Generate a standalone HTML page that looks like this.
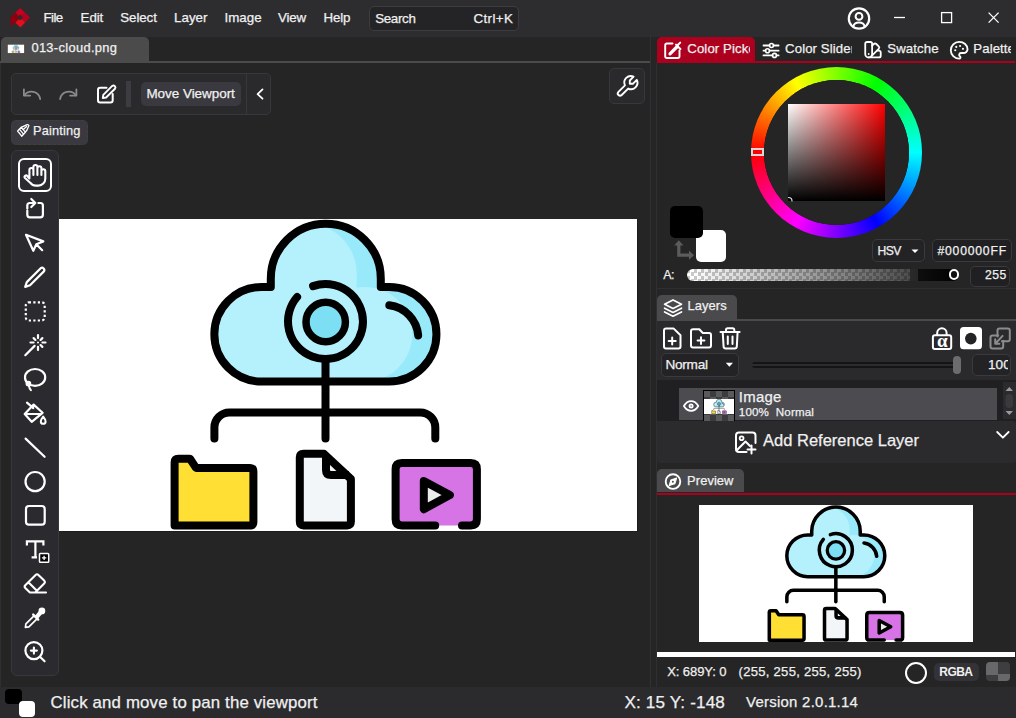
<!DOCTYPE html>
<html><head><meta charset="utf-8">
<style>
*{margin:0;padding:0;box-sizing:border-box}
html,body{width:1016px;height:718px;overflow:hidden;background:#252525;font-family:"Liberation Sans",sans-serif;color:#f0f0f0;font-size:13px}
.a{position:absolute}
.t{position:absolute;white-space:nowrap;line-height:1;-webkit-text-stroke:0.25px #f0f0f0}
svg{position:absolute;overflow:visible}
</style></head><body>
<!-- menu bar -->
<div class="a" style="left:0;top:0;width:1016px;height:36.7px;background:#2d2d30"></div>
<div class="a" style="left:369px;top:6px;width:150px;height:25px;border:1px solid #3d3d41;border-radius:5px;background:#242426"></div>

<!-- tab bar -->
<div class="a" style="left:1px;top:37px;width:148px;height:24px;background:#4b4b4c;border-radius:5px 5px 0 0"></div>
<div class="a" style="left:0;top:61px;width:650px;height:2px;background:#4b4b4c"></div>

<!-- separators -->
<div class="a" style="left:0;top:63px;width:1px;height:624px;background:#2f2f32"></div>
<div class="a" style="left:650px;top:36px;width:1px;height:651px;background:#313134"></div>
<div class="a" style="left:656px;top:63px;width:1px;height:624px;background:#2f2f32"></div>

<!-- toolbar -->
<div class="a" style="left:11px;top:73px;width:260px;height:42px;border:1px solid #38383c;border-radius:5px;background:#2a2a2d"></div>
<div class="a" style="left:126px;top:81px;width:5px;height:26px;background:#3d3d41"></div>
<div class="a" style="left:141px;top:82px;width:100px;height:24px;background:#3a393f;border-radius:5px"></div>
<div class="a" style="left:246px;top:74px;width:1px;height:40px;background:#38383c"></div>
<div class="a" style="left:609px;top:68px;width:36px;height:36px;border:1px solid #38383c;border-radius:5px;background:#2a2a2d"></div>

<div class="a" style="left:11px;top:120px;width:77px;height:25px;background:#3a393f;border-radius:5px;border:1px dashed #3f3f44"></div>

<!-- tool panel -->
<div class="a" style="left:11px;top:150px;width:48px;height:526px;background:#2b2b2f;border:1px solid #38383c;border-radius:6px"></div>
<div class="a" style="left:18px;top:158px;width:34px;height:34px;border:2px solid #fff;border-radius:6px"></div>

<!-- canvas -->
<div class="a" style="left:59px;top:219px;width:578px;height:312px;background:#fff;box-shadow:1px 1px 0 #1c1c1c"></div>

<!-- status bar -->
<div class="a" style="left:0;top:687px;width:1016px;height:31px;background:#2b2b2e"></div>
<div class="a" style="left:5px;top:688.6px;width:17px;height:15.5px;background:#000;border-radius:4px"></div>
<div class="a" style="left:18.7px;top:701px;width:16px;height:15.5px;background:#fff;border-radius:4px"></div>

<!-- right panel tabs -->
<div class="a" style="left:657px;top:37px;width:98px;height:25px;background:#ad001e;border-radius:5px 5px 0 0"></div>
<div class="a" style="left:657px;top:61px;width:358px;height:2px;background:#ad001e"></div>

<!-- color picker body -->
<div class="a" style="left:657px;top:287.5px;width:359px;height:1px;background:#2f2f32"></div>
<div class="a" style="left:750.6px;top:66.6px;width:171.4px;height:171.4px;border-radius:50%;background:conic-gradient(from 270deg,#f00,#ff0,#0f0,#0ff,#00f,#f0f,#f00)"></div>
<div class="a" style="left:763.6px;top:79.8px;width:145px;height:145px;border-radius:50%;background:#252525;box-shadow:0 0 0.6px #111"></div>
<div class="a" style="left:788px;top:104px;width:97px;height:97px;background:linear-gradient(to bottom,rgba(0,0,0,0),#000),linear-gradient(to right,#fff,#f00)"></div>
<div class="a" style="left:751px;top:148px;width:13px;height:8px;border:2px solid #d8d8d8;background:#f00"></div>
<div class="a" style="left:695.7px;top:230px;width:30.8px;height:32.3px;background:#fff;border-radius:5px"></div>
<div class="a" style="left:670px;top:205.6px;width:33.3px;height:32px;background:#000;border-radius:5px"></div>
<div class="a" style="left:872.2px;top:239.4px;width:52.4px;height:23px;border:1px solid #3a3a3e;border-radius:5px;background:#232325"></div>
<div class="a" style="left:932px;top:239.4px;width:79.5px;height:23px;border:1px solid #3a3a3e;border-radius:5px;background:#202022"></div>
<div class="a" style="left:687px;top:269px;width:272px;height:12px;border-radius:6px;background:linear-gradient(to right,rgba(0,0,0,0) 2%,rgba(0,0,0,.7) 82%,#2a2a2b 82%,#262627 85%,#0e0e0e 85%,#000),repeating-conic-gradient(#fff 0 25%,#c8c8c8 0 50%) 0 0/7px 7px"></div>
<div class="a" style="left:948.8px;top:269.4px;width:10.6px;height:10.6px;border-radius:50%;border:2px solid #fff;background:#111"></div>
<div class="a" style="left:969.9px;top:265.6px;width:40.1px;height:21px;border:1px solid #3a3a3e;border-radius:5px;background:#202022"></div>

<!-- layers -->
<div class="a" style="left:657px;top:295.4px;width:80px;height:24px;background:#4a4a4d;border-radius:5px 5px 0 0"></div>
<div class="a" style="left:657px;top:319px;width:359px;height:2px;background:#4a4a4d"></div>
<div class="a" style="left:657px;top:321px;width:359px;height:59px;background:#2a2a2d"></div>
<div class="a" style="left:657px;top:380px;width:359px;height:41.5px;background:#202022"></div>
<div class="a" style="left:660.7px;top:353.4px;width:78.8px;height:23.2px;border:1px solid #3a3a3e;border-radius:5px;background:#232325"></div>
<div class="a" style="left:751.6px;top:362px;width:208px;height:6px;border-radius:3px;background:linear-gradient(#141416 0 35%,#2c2c2f 35% 62%,#141416 62%)"></div>
<div class="a" style="left:952.7px;top:356px;width:8.3px;height:18px;border-radius:4px;background:#6c6c6e"></div>
<div class="a" style="left:972.3px;top:354.3px;width:39.1px;height:21.5px;border:1px solid #3a3a3e;border-radius:5px;background:#232325"></div>
<div class="a" style="left:678.9px;top:388px;width:318.2px;height:32.4px;background:#4b4b50"></div>
<div class="a" style="left:703px;top:390px;width:32px;height:31px;background:#000"></div>
<div class="a" style="left:704px;top:391px;width:30px;height:30px;background:repeating-conic-gradient(#3c3c3e 0 25%,#5a5a5c 0 50%) 0 0/12px 12px"></div>
<div class="a" style="left:704px;top:398.9px;width:30.1px;height:14.8px;background:#fff"></div>
<div class="a" style="left:1002.9px;top:382.4px;width:13.1px;height:37px;background:#2b2b2e"></div>
<div class="a" style="left:657px;top:421.4px;width:359px;height:41.6px;background:#2b2b2e;border-radius:0 4px 4px 4px"></div>

<!-- preview -->
<div class="a" style="left:657px;top:469px;width:87px;height:23.4px;background:#4a4a4d;border-radius:5px 5px 0 0"></div>
<div class="a" style="left:657px;top:492.6px;width:359px;height:2.4px;background:#ad001e"></div>
<div class="a" style="left:698.7px;top:504.6px;width:274.4px;height:137.6px;background:#fff"></div>
<div class="a" style="left:657px;top:652px;width:357.7px;height:5px;background:#fff"></div>
<div class="a" style="left:905.1px;top:661.5px;width:22.1px;height:22.1px;border-radius:50%;border:2.6px solid #fff"></div>
<div class="a" style="left:933.7px;top:662.7px;width:45.3px;height:18.5px;border-radius:5px;background:#333337"></div>
<div class="a" style="left:985.5px;top:662.1px;width:24.4px;height:19.3px;border-radius:4px;background:repeating-conic-gradient(#3e3e40 0 25%,#68686a 0 50%) 0 0/24.4px 25px;background-position:0 0"></div>
<svg width="1016" height="718" style="left:0;top:0" viewBox="0 0 1016 718">
<defs>
<clipPath id="cc"><path d="M270.8,287 H261.6 A47.25,47.25 0 0 0 261.6,381.5 H389.2 A47.25,47.25 0 0 0 389.2,287 H380.8 V278.7 A55,55 0 0 0 270.8,278.7 Z"/></clipPath>
<clipPath id="cv"><rect x="59" y="219" width="578" height="312"/></clipPath>
<clipPath id="pv"><rect x="14.5" y="218" width="622.3" height="312"/></clipPath>
<g id="ill">
<path d="M270.8,287 H261.6 A47.25,47.25 0 0 0 261.6,381.5 H389.2 A47.25,47.25 0 0 0 389.2,287 H380.8 V278.7 A55,55 0 0 0 270.8,278.7 Z" fill="#98eafa"/>
<g clip-path="url(#cc)" fill="#b4f1fc">
<circle cx="306.6" cy="273.5" r="50"/><rect x="200" y="273.5" width="156.6" height="120"/>
<circle cx="365" cy="334.25" r="47.25"/>
</g>
<path d="M270.8,287 H261.6 A47.25,47.25 0 0 0 261.6,381.5 H389.2 A47.25,47.25 0 0 0 389.2,287 H380.8 V278.7 A55,55 0 0 0 270.8,278.7 Z" fill="none" stroke="#000" stroke-width="8" stroke-linejoin="round"/>
<path d="M313.1,286.1 A37.5,37.5 0 1 1 297.1,297" fill="none" stroke="#000" stroke-width="8" stroke-linecap="round"/>
<circle cx="325.7" cy="322" r="19.7" fill="#7ddff3" stroke="#000" stroke-width="7.5"/>
<path d="M389.3,305.3 A33,33 0 0 1 418.2,335.4" fill="none" stroke="#000" stroke-width="8" stroke-linecap="round"/>
<path d="M325.5,359 V438.5" stroke="#000" stroke-width="8" stroke-linecap="round"/>
<path d="M214.4,438.5 V427.5 A15,15 0 0 1 229.4,412.5 H420.3 A15,15 0 0 1 435.3,427.5 V438.5" fill="none" stroke="#000" stroke-width="8" stroke-linecap="round"/>
<path d="M174.6,525.6 V462.5 Q174.6,458.7 178.4,458.7 H190 L196,467.9 H249.6 Q253.4,467.9 253.4,471.7 V521.8 Q253.4,525.6 249.6,525.6 Z" fill="#ffdf33" stroke="#000" stroke-width="8" stroke-linejoin="round"/>
<path d="M299.8,457.6 Q299.8,453.8 303.6,453.8 H324 L350.9,479 V521.6 Q350.9,525.4 347.1,525.4 H303.6 Q299.8,525.4 299.8,521.6 Z" fill="#f3f6f8" stroke="#000" stroke-width="8" stroke-linejoin="round"/>
<path d="M326,456 V470 Q326,475 331,475 H349" fill="none" stroke="#000" stroke-width="8" stroke-linejoin="round"/>
<path d="M395.6,469 Q395.6,462.9 401.7,462.9 H470.8 Q476.9,462.9 476.9,469 V519.3 Q476.9,525.4 470.8,525.4 H401.7 Q395.6,525.4 395.6,519.3 Z" fill="#d674e6"/>
<path d="M435.2,525.4 H401.7 Q395.6,525.4 395.6,519.3 V469 Q395.6,462.9 401.7,462.9 H470.8 Q476.9,462.9 476.9,469 V519.3 Q476.9,525.4 470.8,525.4 H462" fill="none" stroke="#000" stroke-width="8" stroke-linecap="round"/>
<path d="M423.8,481 L449.9,495 L423.8,509.2 Z" fill="#ebebeb" stroke="#000" stroke-width="8" stroke-linejoin="round"/>
</g>
</defs>
<g clip-path="url(#cv)"><use href="#ill"/></g>
<g transform="translate(692.3,408.4) scale(0.441)" clip-path="url(#pv)"><use href="#ill"/></g>
<g transform="translate(703.3,388.35) scale(0.0484)" clip-path="url(#pv)"><use href="#ill"/></g>
<rect x="7.8" y="44.7" width="16.3" height="8.35" fill="#fff"/><g transform="translate(7.42,39.0) scale(0.0262)" clip-path="url(#pv)"><use href="#ill"/></g>
</svg>
<div class="t" style="left:43.5px;top:10.6px;font-size:13.33px;letter-spacing:-0.57px">File</div>
<div class="t" style="left:80.6px;top:10.6px;font-size:13.33px;letter-spacing:-0.10px">Edit</div>
<div class="t" style="left:120.3px;top:10.6px;font-size:13.33px;letter-spacing:-0.10px">Select</div>
<div class="t" style="left:174.1px;top:10.6px;font-size:13.33px;letter-spacing:-0.02px">Layer</div>
<div class="t" style="left:224.6px;top:10.6px;font-size:13.33px;letter-spacing:-0.02px">Image</div>
<div class="t" style="left:278.1px;top:10.6px;font-size:13.33px;letter-spacing:-0.20px">View</div>
<div class="t" style="left:323.4px;top:10.6px;font-size:13.33px;letter-spacing:-0.10px">Help</div>
<div class="t" style="left:375.2px;top:11.8px;font-size:13.33px;letter-spacing:-0.32px">Search</div>
<div class="t" style="left:473.4px;top:11.8px;font-size:13.33px;letter-spacing:0.42px">Ctrl+K</div>
<div class="t" style="left:31.4px;top:41.9px;font-size:12.90px;letter-spacing:0.32px">013-cloud.png</div>
<div class="t" style="left:146.4px;top:86.7px;font-size:13.48px;letter-spacing:-0.03px">Move Viewport</div>
<div class="t" style="left:33.0px;top:125.4px;font-size:12.75px;letter-spacing:0.17px">Painting</div>
<div class="t" style="left:687.3px;top:42.0px;font-size:13.19px;letter-spacing:0.10px;width:62.6px;overflow:hidden">Color Picker</div>
<div class="t" style="left:785.1px;top:42.0px;font-size:13.19px;letter-spacing:0.10px;width:67.4px;overflow:hidden">Color Slider</div>
<div class="t" style="left:887.3px;top:42.0px;font-size:13.19px;letter-spacing:0.10px;width:51.8px;overflow:hidden">Swatches</div>
<div class="t" style="left:973.3px;top:42.0px;font-size:13.19px;letter-spacing:0.10px;width:37.8px;overflow:hidden">Palettes</div>
<div class="t" style="left:877.5px;top:244.7px;font-size:12.17px;letter-spacing:-0.60px">HSV</div>
<div class="t" style="left:937.5px;top:244.7px;font-size:12.17px;letter-spacing:0.80px">#000000FF</div>
<div class="t" style="left:663.3px;top:268.9px;font-size:12.46px;letter-spacing:-0.60px">A:</div>
<div class="t" style="left:985.0px;top:269.4px;font-size:12.17px;letter-spacing:0.45px">255</div>
<div class="t" style="left:687.5px;top:300.4px;font-size:12.90px;letter-spacing:0.10px">Layers</div>
<div class="t" style="left:665.5px;top:357.5px;font-size:13.62px;letter-spacing:-0.28px">Normal</div>
<div class="t" style="left:987.9px;top:357.6px;font-size:13.62px;letter-spacing:0.10px;width:20.1px;overflow:hidden">100</div>
<div class="t" style="left:738.8px;top:390.3px;font-size:14.93px;letter-spacing:0.28px">Image</div>
<div class="t" style="left:738.8px;top:407.1px;font-size:11.59px;letter-spacing:0.16px">100%&nbsp; Normal</div>
<div class="t" style="left:763.1px;top:433.2px;font-size:16.52px;letter-spacing:-0.01px">Add Reference Layer</div>
<div class="t" style="left:687.1px;top:474.7px;font-size:12.90px;letter-spacing:0.08px">Preview</div>
<div class="t" style="left:667.2px;top:665.3px;font-size:13.04px;letter-spacing:-0.09px">X: 689Y: 0</div>
<div class="t" style="left:738.5px;top:665.3px;font-size:13.04px;letter-spacing:0.29px">(255, 255, 255, 255)</div>
<div class="t" style="left:939.3px;top:665.6px;font-size:12.03px;letter-spacing:-0.57px;font-weight:bold;-webkit-text-stroke:0">RGBA</div>
<div class="t" style="left:50.5px;top:694.5px;font-size:16.81px;letter-spacing:0.17px">Click and move to pan the viewport</div>
<div class="t" style="left:624.5px;top:694.1px;font-size:17.10px;letter-spacing:0.15px">X: 15 Y: -148</div>
<div class="t" style="left:746.0px;top:695.0px;font-size:14.93px;letter-spacing:0.27px">Version 2.0.1.14</div>
<svg width="1016" height="718" style="left:0;top:0" viewBox="0 0 1016 718" fill="none" stroke="#fff" stroke-width="2.2" stroke-linecap="round" stroke-linejoin="round">
<!-- logo -->
<g stroke="none">
<polygon points="20.2,8 25.1,12.75 20.2,17.5 15.2,12.75" fill="#c8001e"/>
<polygon points="25.1,12.75 30,17.5 25.2,22.4 20.2,17.5" fill="#b8001c"/>
<polygon points="20.2,17.5 25.2,22.4 20.3,27.4 15.3,22.5" fill="#e2101c"/>
<polygon points="15.2,12.75 20.2,17.5 15.3,22.5 11,26.6 10.2,17.5" fill="#8e0010"/>
<polygon points="20.2,14.6 23.1,17.5 20.2,20.4 17.3,17.5" fill="#2b2b2e"/>
</g>
<!-- profile & window controls -->
<circle cx="859" cy="18.5" r="10.2" stroke-width="2.2"/>
<circle cx="859" cy="16.4" r="3.4" stroke-width="2"/>
<path d="M853.4,26.5 Q854,22.6 859,22.6 Q864,22.6 864.6,26.5" stroke-width="2"/>
<path d="M894,17.5 H905" stroke-width="1.3" stroke-linecap="butt"/>
<rect x="941.6" y="12.6" width="10" height="10" stroke-width="1.3" stroke-linejoin="miter"/>
<path d="M988.6,12.6 L998.6,22.6 M998.6,12.6 L988.6,22.6" stroke-width="1.3" stroke-linecap="butt"/>
<!-- toolbar -->
<g stroke="#8a8a8c" stroke-width="1.8">
<path d="M23.9,89.3 V95.6 H30.2"/>
<path d="M24.4,95.3 A8.8,8.8 0 0 1 40.2,99"/>
<path d="M76.4,89.3 V95.6 H70.1"/>
<path d="M75.9,95.3 A8.8,8.8 0 0 0 60.1,99"/>
</g>
<path d="M106.5,87.8 H100.2 Q98,87.8 98,90 V100.3 Q98,102.5 100.2,102.5 H110.5 Q112.7,102.5 112.7,100.3 V94" stroke-width="2"/>
<path d="M102.8,98 L103.3,94.8 L112.2,85.9 A2,2 0 0 1 115,88.7 L106.1,97.5 Z" stroke-width="1.9"/>
<path d="M262.5,89.4 L257.6,94.1 L262.5,98.7" stroke-width="1.8"/>
<g transform="translate(640.6,72.9) scale(-1.08,1.08)"><path d="M7 10h3v-3l-3.5 -3.5a6 6 0 0 1 8 8l6 6a2 2 0 0 1 -3 3l-6 -6a6 6 0 0 1 -8 -8l3.5 3.5" stroke-width="1.75"/></g>
<!-- painting brush -->
<g stroke-width="1.3">
<path d="M17.6,131 L21.3,127.3 L25.4,132.2 L21.7,136.2 Z"/>
<path d="M19.4,129.2 L23.5,134.2 M21.3,127.3 L22.8,126.6 L27.2,124.6 Q28.6,124.3 28.9,125.6 L27,130 L25.4,132.2"/>
<path d="M23.3,129.5 L26.6,126.6"/>
</g>
<!-- tools -->
<path d="M29.4,178.5 V170 A2,2 0 0 1 33.4,170 V175 M33.4,170.5 V167 A2,2 0 0 1 37.4,167 V175 M37.4,168.3 A2,2 0 0 1 41.4,168.3 V175 M41.4,171.2 A1.95,1.95 0 0 1 45.3,171.2 V178.8 A6.8,6.8 0 0 1 38.5,185.6 H35.8 A6.5,6.5 0 0 1 30.5,183 L25,178 A1.5,1.5 0 0 1 27.3,176 L29.4,178.5" stroke-width="2.1"/>
<path d="M27.3,208.6 V205.5 Q27.3,203 29.8,203 H35 M31.3,199 L35.3,203 L31.3,207 M38.4,203 H40.4 Q42.9,203 42.9,205.5 V214.8 Q42.9,217.3 40.4,217.3 H29.8 Q27.3,217.3 27.3,214.8 V210.6"/>
<path d="M26,234.8 L43.3,241.4 L36.3,244.3 L33.3,250.8 Z M36.3,244.3 L42.2,250.2"/>
<path d="M25.2,286.9 L26.8,282.1 L40.7,268.2 A2.3,2.3 0 0 1 43.9,271.4 L30,285.3 Z"/>
<rect x="25.8" y="302.3" width="18.9" height="18.2" rx="3" stroke-dasharray="2.2 2.3" stroke-linecap="butt"/>
<path d="M25.3,355.2 L34.6,345.9 M42.40,342.50 L45.50,342.50 M38.00,338.10 L38.00,335.00 M33.60,342.50 L30.50,342.50 M38.00,346.90 L38.00,350.00 M40.55,339.95 L42.38,338.12 M35.45,339.95 L33.62,338.12 M40.55,345.05 L42.38,346.88" stroke-width="2.2"/>
<circle cx="38" cy="342.5" r="1" fill="#fff" stroke="none"/>
<ellipse cx="35.1" cy="377.4" rx="10.1" ry="8.4" stroke-width="2.2"/>
<circle cx="28.4" cy="383.6" r="1.9" stroke-width="1.9"/>
<path d="M28.9,385.5 Q29.3,388.3 30.9,390.2" stroke-width="2"/>
<path d="M24.7,414 L33.65,404.6 L42.6,412.8 L31.7,421.8 Z M25.5,414 H41 M27,402.7 L33.3,408.1"/>
<path d="M43.2,416.6 Q40.8,419.7 40.8,421.4 A2.4,2.4 0 0 0 45.6,421.4 Q45.6,419.7 43.2,416.6 Z" stroke-width="2"/>
<path d="M25.6,438.6 L44.6,456.8"/>
<circle cx="35.1" cy="481.6" r="9.6"/>
<rect x="26" y="506" width="18.7" height="18.7" rx="3"/>
<path d="M26.9,545.5 V541.3 H43.4 V545.5 M35.4,541.3 V557.4 M31.6,557.4 H37" stroke-width="2.2" stroke-linecap="butt" stroke-linejoin="miter"/>
<rect x="39.5" y="553.5" width="9.2" height="8.8" fill="#000" stroke-width="1.5" rx="0.8"/>
<path d="M44.1,555.7 V560.1 M41.9,557.9 H46.3" stroke-width="1.3" stroke-linecap="butt"/>
<path d="M29.9,592.5 L25.3,588 Q24,586.6 25.3,585.2 L35.6,574.9 Q37,573.6 38.4,574.9 L44.2,580.6 Q45.5,582 44.2,583.4 L35.2,592.5 M29.9,592.5 H46 M28.6,582.5 L36.4,590.3" stroke-width="2.1"/>
<path d="M25.4,627.4 L25.9,623.9 L34.2,615.6 M25.4,627.4 L28.9,626.9 L37.2,618.6" stroke-width="1.7"/>
<path d="M33.2,614.6 L38.2,619.6" stroke-width="2.4"/>
<circle cx="41.9" cy="610.9" r="3.4" fill="#fff" stroke="none"/>
<path d="M36.2,617.6 L41.9,610.9" stroke-width="4.2" stroke-linecap="butt"/>
<circle cx="33.9" cy="650.6" r="8.5"/>
<path d="M33.9,647.6 V653.6 M30.9,650.6 H36.9 M40.2,656.9 L44.6,661.3" stroke-width="2.1"/>
</svg>
<svg width="1016" height="718" style="left:0;top:0" viewBox="0 0 1016 718" fill="none" stroke="#fff" stroke-width="2" stroke-linecap="round" stroke-linejoin="round">
<!-- right tabs -->
<path d="M672.5,43.5 H667 Q665.2,43.5 665.2,45.3 V56.2 Q665.2,58 667,58 H677.7 Q679.5,58 679.5,56.2 V50.5" stroke-width="1.9"/>
<path d="M670,53.8 L677.3,46.5" stroke-width="3.2" stroke-linecap="round"/>
<path d="M676,44.6 L680.4,49 M678,44.8 L680.2,42.6" stroke-width="2" stroke-linecap="round"/>
<g stroke-width="1.8">
<path d="M763.5,45.5 H769.5 M773.5,45.5 H778.6 M763.5,50.7 H765.5 M769.5,50.7 H778.6 M763.5,55.4 H772.5 M776.5,55.4 H778.6"/>
<circle cx="771.5" cy="45.5" r="2" stroke-width="1.6"/>
<circle cx="767.5" cy="50.7" r="2" stroke-width="1.6"/>
<circle cx="774.5" cy="55.4" r="2" stroke-width="1.6"/>
</g>
<g transform="translate(883.3,39.4) scale(-0.86,0.86)" stroke-width="2.1">
<path d="M19 3h-4a2 2 0 0 0 -2 2v12a4 4 0 0 0 8 0v-12a2 2 0 0 0 -2 -2"/><path d="M13 7.35l-2 -2a2 2 0 0 0 -2.828 0l-2.828 2.828a2 2 0 0 0 0 2.828l9 9"/><path d="M7.3 13h-2.3a2 2 0 0 0 -2 2v4a2 2 0 0 0 2 2h12"/><path d="M17 17l0 .01"/>
</g>
<g transform="translate(948,39.1) scale(0.93)" stroke-width="2">
<path d="M12 21a9 9 0 0 1 0 -18c4.97 0 9 3.582 9 8c0 1.06 -.474 2.078 -1.318 2.828c-.844 .75 -1.989 1.172 -3.182 1.172h-2.5a2 2 0 0 0 -1 3.75a1.3 1.3 0 0 1 -1 2.25"/><g fill="#fff" stroke="none"><circle cx="8.9" cy="8.4" r="1.15"/><circle cx="13" cy="7.4" r="1.15"/><circle cx="16.1" cy="10.5" r="1.15"/><circle cx="7.8" cy="12" r="1.15"/></g>
</g>
<!-- color picker extras -->
<path d="M788.5,197.5 A3.5,3.5 0 0 1 792,201" stroke="#ddd" stroke-width="1.2"/>
<path d="M911.5,249.5 H918.5 L915,253 Z" fill="#fff" stroke="none"/>
<g stroke="#5c5c5e" stroke-width="3.2" stroke-linecap="butt" stroke-linejoin="miter">
<path d="M678.8,243 V255.2 H690"/>
</g>
<path d="M674.2,245.5 L678.8,240.2 L683.4,245.5 Z M689,250.6 L694,255.2 L689,259.8 Z" fill="#5c5c5e" stroke="none"/>
<!-- layers -->
<path d="M664.6,304.2 L673,299.9 L681.5,304.2 L673,308.5 Z M664.6,308.2 L673,312.4 L681.5,308.2 M664.6,312 L673,316.2 L681.5,312" stroke-width="1.7"/>
<path d="M673.5,328.4 H666 Q664,328.4 664,330.4 V346.4 Q664,348.4 666,348.4 H678.5 Q680.5,348.4 680.5,346.4 V335.2 Z M672.2,337.5 V344.5 M668.7,341 H675.7"/>
<path d="M694.5,329.3 H699.3 L702.8,333 H709 Q711,333 711,335 V345.6 Q711,347.6 709,347.6 H693 Q691,347.6 691,345.6 V331.3 Q691,329.3 693,329.3 Z M701,337.2 V344 M697.6,340.6 H704.4"/>
<path d="M720.5,332 H739.6 M722.7,332 L723.6,346.6 Q723.8,348.5 725.7,348.5 H734.7 Q736.6,348.5 736.8,346.6 L737.6,332 M726,332 V330 Q726,328.3 727.7,328.3 H732.6 Q734.3,328.3 734.3,330 V332 M727.8,336.5 V344 M732.5,336.5 V344"/>
<path d="M937.2,335 V333 A4.7,4.7 0 0 1 946.6,333 V335"/>
<rect x="932.9" y="335.3" width="18.3" height="13.6" rx="2"/>
<text x="942.3" y="346.8" fill="#fff" stroke="none" font-family="Liberation Serif" font-size="19" font-weight="bold" text-anchor="middle">α</text>
<rect x="960" y="327" width="22" height="22.3" rx="3.5" fill="#fff" stroke="none"/>
<circle cx="970.8" cy="338.6" r="5.8" fill="#232325" stroke="none"/>
<g stroke="#8c8c8c">
<path d="M997.5,336.5 V330.5 Q997.5,328.5 999.5,328.5 H1007.8 Q1009.8,328.5 1009.8,330.5 V339.2 Q1009.8,341.2 1007.8,341.2 H1001.8"/>
<path d="M998.2,335.5 H992.5 Q990.5,335.5 990.5,337.5 V346.4 Q990.5,348.4 992.5,348.4 H1001.2 Q1003.2,348.4 1003.2,346.4 V340.8"/>
<path d="M1002.6,335.9 L995.4,343.5 M995.2,339.2 V343.8 H999.4"/>
</g>
<path d="M754.5,365 H759" stroke="none"/>
<path d="M726.5,364 L729.8,367.2 L733,364" stroke="none"/>
<path d="M725.8,362.8 H733 L729.4,366.8 Z" fill="#fff" stroke="none"/>
<!-- layer row -->
<g transform="translate(681.5,396.4) scale(0.8)" stroke-width="2.25">
<path d="M10 12a2 2 0 1 0 4 0a2 2 0 0 0 -4 0"/><path d="M21 12c-2.4 4 -5.4 6 -9 6c-3.6 0 -6.6 -2 -9 -6c2.4 -4 5.4 -6 9 -6c3.6 0 6.6 2 9 6"/>
</g>
<!-- scrollbar -->
<path d="M1005.5,391 L1009.3,387 L1013,391 Z M1005.5,411 L1009.3,415 L1013,411 Z" fill="#9a9a9c" stroke="none"/>
<rect x="1005.5" y="394" width="7.5" height="14" rx="3.7" fill="#3a3a3e" stroke="none"/>
<!-- add reference -->
<path d="M746.5,452 H739 Q736,452 736,449 V435.5 Q736,432.5 739,432.5 H752.5 Q755.5,432.5 755.5,435.5 V443" stroke-width="2"/>
<path d="M736.5,450.5 L745.5,441.5 L750,446" stroke-width="2"/>
<circle cx="741.6" cy="438.2" r="1.9" stroke-width="1.8"/>
<path d="M751.5,445.5 V453.5 M747.5,449.5 H755.5" stroke-width="2"/>
<path d="M997.2,432 L1002.9,437.7 L1008.6,432" stroke-width="1.8"/>
<!-- preview icon -->
<circle cx="673" cy="481.6" r="7.3" stroke-width="1.9"/>
<path d="M669.2,485.6 L670.9,479.9 L676.6,478 L674.8,483.8 Z" fill="#fff" stroke-width="1.1"/><circle cx="672.9" cy="481.8" r="1" fill="#4b4b4c" stroke="none"/>
<!-- preview status checker -->
</svg>

</body></html>
